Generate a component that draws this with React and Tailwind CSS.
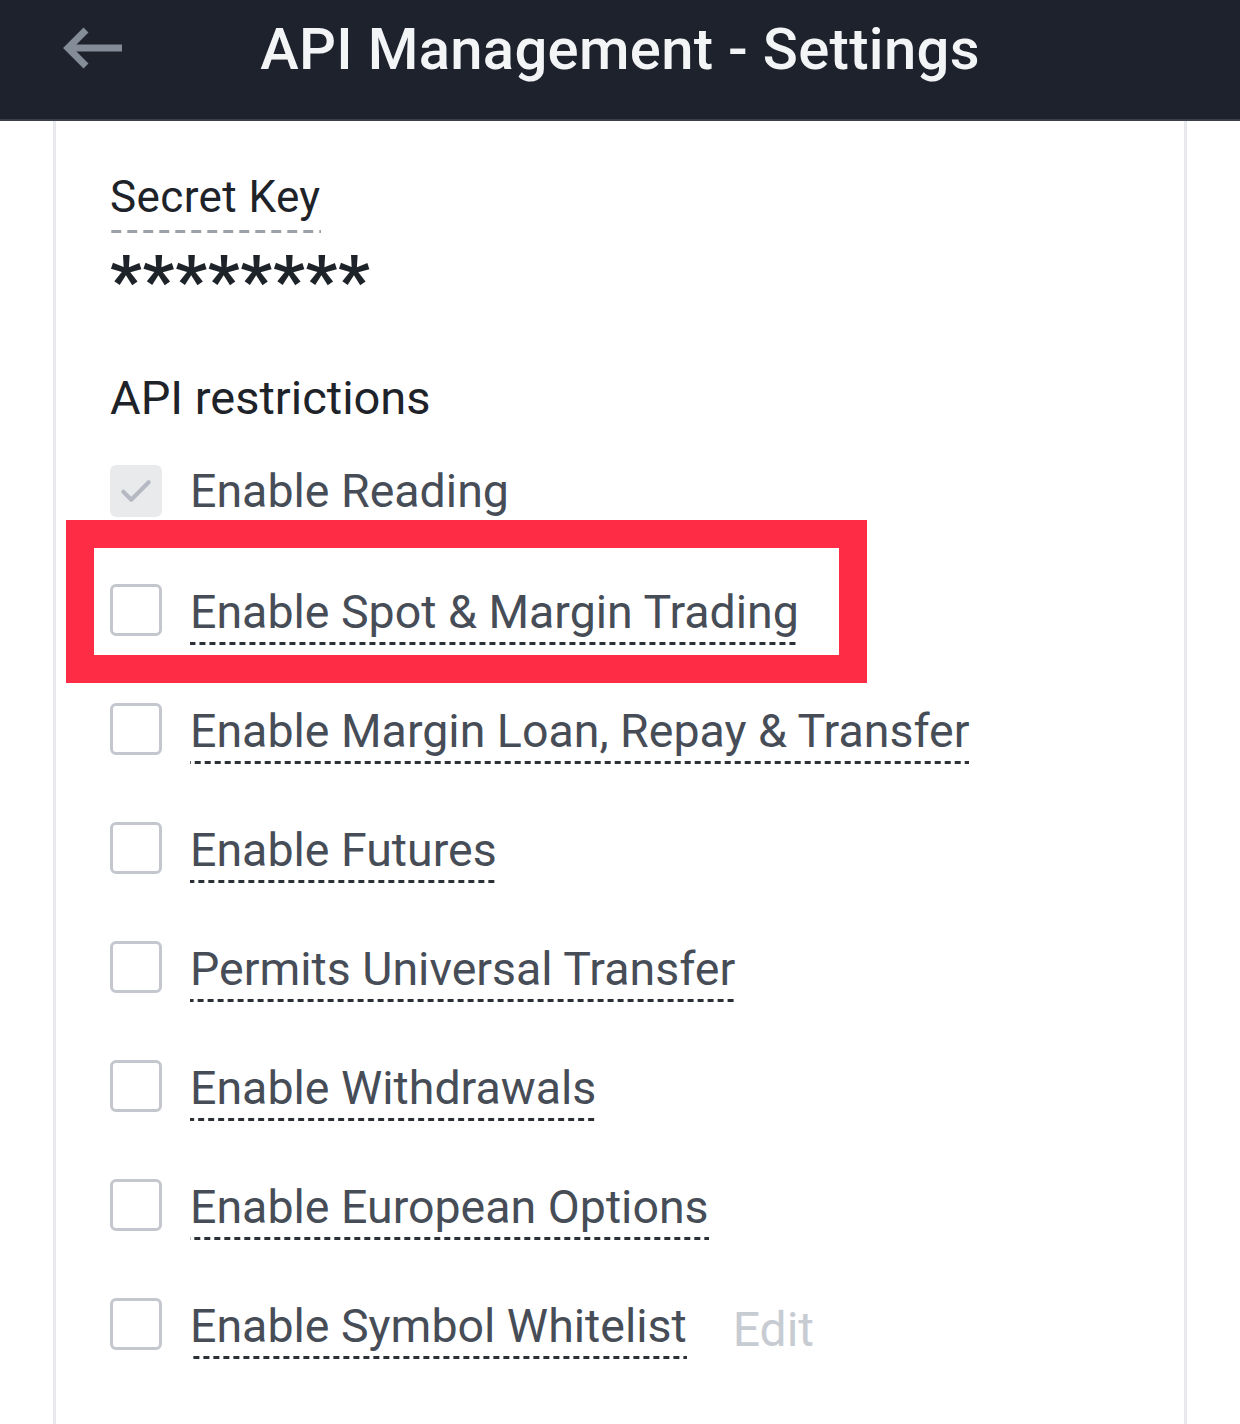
import React from "react";

const rows = [
  { label: "Enable Reading", disabled: true },
  { label: "Enable Spot & Margin Trading" },
  { label: "Enable Margin Loan, Repay & Transfer" },
  { label: "Enable Futures" },
  { label: "Permits Universal Transfer" },
  { label: "Enable Withdrawals" },
  { label: "Enable European Options" },
  { label: "Enable Symbol Whitelist", edit: true },
];

function Check({ disabled }) {
  if (disabled) {
    return (
      <div className="w-[52px] h-[52px] rounded-[6px] bg-[#e9eaec] flex items-center justify-center shrink-0">
        <svg width="38" height="38" viewBox="0 0 24 24" fill="none" stroke="#b5bac2" strokeWidth="2.6" strokeLinecap="round" strokeLinejoin="round">
          <path d="M4 12.5l5 5L20 6.5" />
        </svg>
      </div>
    );
  }
  return <div className="w-[52px] h-[52px] rounded-[6px] border-[3px] border-[#c4c8ce] bg-white shrink-0" />;
}

export default function App() {
  return (
    <div className="w-[1240px] h-[1424px] bg-white overflow-hidden" style={{ fontFamily: "Roboto, 'Noto Sans', sans-serif" }}>
      <header className="h-[121px] bg-[#1e222d] flex items-center relative border-b-[2px] border-[#3a3f4a]">
        <svg className="absolute left-[60px] top-[26px]" width="64" height="44" viewBox="0 0 64 44" fill="none" stroke="#848c98" strokeWidth="7" strokeLinecap="butt" strokeLinejoin="miter">
          <path d="M62 22H8" />
          <path d="M26 4L8 22l18 18" />
        </svg>
        <h1 className="w-full text-center text-[58px] font-medium text-[#f3f4f6] tracking-[0.3px] leading-none -mt-[22px]">
          API Management - Settings
        </h1>
      </header>
      <div className="ml-[53px] w-[1134px] h-[1303px] border-l-[3px] border-r-[3px] border-[#e8e9ec] pl-[54px] pt-[50px] relative">
        <div className="inline-block text-[44px] leading-[52px] tracking-[0.4px] text-[#1e2329] pb-[10px] bg-[linear-gradient(to_right,#9ca1a9_62%,transparent_62%)] bg-[length:16px_3px] bg-repeat-x bg-bottom">
          Secret Key
        </div>
        <div className="text-[70px] font-bold text-[#1e2329] leading-[56px] mt-[20px] tracking-[0.8px] h-[50px]">********</div>
        <div className="text-[47px] leading-[54px] text-[#1e2329] mt-[68px]">API restrictions</div>
        <div className="mt-[6px] flex flex-col">
          {rows.map((r) => (
            <div key={r.label} className="h-[119px] flex items-center gap-[28px] relative">
              <Check disabled={r.disabled} />
              {r.disabled ? (
                <span className="text-[46.5px] leading-[54px] text-[#474d57]">{r.label}</span>
              ) : (
                <span className="text-[46.5px] leading-[54px] text-[#474d57] pb-[6px] translate-y-[5px] bg-[linear-gradient(to_right,#2b2f36_62%,transparent_62%)] bg-[length:10px_3px] bg-repeat-x bg-bottom">
                  {r.label}
                </span>
              )}
              {r.edit && <span className="text-[48px] leading-[54px] text-[#c7cbd2] ml-[18px] translate-y-[6px]">Edit</span>}
            </div>
          ))}
        </div>
        <div className="absolute left-[10px] top-[399px] w-[801px] h-[163px] border-[28px] border-[#fe2c45] pointer-events-none" />
      </div>
    </div>
  );
}
